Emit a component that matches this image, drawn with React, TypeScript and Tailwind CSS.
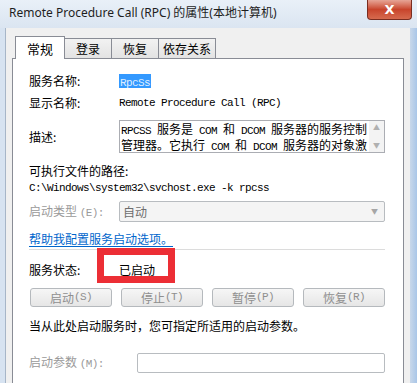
import React from 'react';

const M = ({ children }: { children: React.ReactNode }) => (
  <span className="font-['Liberation_Mono',monospace] text-[11px] tracking-[-0.6px]">{children}</span>
);

const Btn = ({ label, k }: { label: string; k: string }) => (
  <div className="w-[82px] h-[19px] flex items-center justify-center rounded-[3px] border border-[#b5b9bd] bg-gradient-to-b from-[#f6f6f6] to-[#e6e6e6] text-[#8f8f8f] text-[12px]">
    {label}
    <M>({k})</M>
  </div>
);

const Tab = ({ label, active }: { label: string; active?: boolean }) =>
  active ? (
    <div className="relative z-10 -mb-px h-[23px] w-[50px] border border-b-0 border-[#898c95] bg-white flex items-start justify-center pt-[2px] text-[13px] text-black">
      {label}
    </div>
  ) : (
    <div className="h-[20px] px-[4px] min-w-[47px] border border-l-0 border-b-0 border-[#898c95] bg-gradient-to-b from-[#f2f2f2] to-[#e3e3e3] flex items-center justify-center text-[12px] text-black">
      {label}
    </div>
  );

export default function App() {
  return (
    <div className="relative w-[417px] h-[383px] overflow-hidden bg-[#dfe8f3] font-['Noto_Sans_CJK_SC',sans-serif] text-[12px] text-black">
      {/* title bar */}
      <div className="h-[28px] flex items-center justify-between pl-[9px] bg-gradient-to-b from-[#e9f0f8] to-[#dbe5f1]">
        <span className="font-['Noto_Sans','Noto_Sans_CJK_SC',sans-serif] text-[12px] text-[#1e1e1e] -mt-[2px]">
          Remote Procedure Call (RPC) 的属性(本地计算机)
        </span>
        <div className="self-start mr-[5px] w-[45px] h-[20px] rounded-b-[4px] border border-t-0 border-[#7a2d20] bg-gradient-to-b from-[#e6a496] via-[#c8442c] to-[#d66a4e] flex items-center justify-center">
          <span className="font-['DejaVu_Sans',sans-serif] font-bold text-white text-[13px] leading-none">X</span>
        </div>
      </div>

      <div className="flex h-[355px]">
        <div className="w-[6px] bg-[#d7e3f1] border-r border-[#a7b6c8]" />
        {/* body */}
        <div className="w-[404px] bg-[#f0f0f0] pl-[6px] pr-[6px] pt-[8px]">
          <div className="flex items-end pl-[3px]">
            <Tab label="常规" active />
            <Tab label="登录" />
            <Tab label="恢复" />
            <Tab label="依存关系" />
          </div>
          <div className="h-[340px] border border-[#898c95] bg-white pl-[16px] pr-[18px] pt-[15px]">
            <div className="flex h-[14px] items-center">
              <span className="w-[90px]">服务名称:</span>
              <span className="bg-[#3399ff] text-[#dfeeff] px-[1px] h-[14px] leading-[14px]">
                <M>RpcSs</M>
              </span>
            </div>
            <div className="flex h-[14px] items-center mt-[8px]">
              <span className="w-[90px]">显示名称:</span>
              <M>Remote Procedure Call (RPC)</M>
            </div>
            <div className="flex items-center mt-[10px]">
              <span className="w-[90px]">描述:</span>
              <div className="flex w-[266px] h-[33px] border border-[#abadb3] bg-white">
                <div className="flex-1 overflow-hidden whitespace-pre pl-[1px] pt-[1px] leading-[14px] text-[12px]">
                  <div>
                    <M>RPCSS </M>服务是<M> COM </M>和<M> DCOM </M>服务器的服务控制
                  </div>
                  <div>
                    管理器。它执行<M> COM </M>和<M> DCOM </M>服务器的对象激
                  </div>
                </div>
                <div className="w-[15px] bg-[#f3f3f3] flex flex-col items-center justify-between py-[3px] text-[#b0b0b0] text-[7px] leading-none">
                  <span>▲</span>
                  <span>▼</span>
                </div>
              </div>
            </div>
            <div className="h-[14px] leading-[14px] mt-[11px]">可执行文件的路径:</div>
            <div className="h-[14px] leading-[14px] mt-[1px]">
              <M>{'C:\\Windows\\system32\\svchost.exe -k rpcss'}</M>
            </div>
            <div className="flex items-center mt-[8px]">
              <span className="w-[90px] text-[#9a9a9a]">
                启动类型 <M>(E):</M>
              </span>
              <div className="w-[266px] h-[21px] border border-[#b8bcc0] rounded-[2px] bg-[#f4f4f4] flex items-center justify-between pl-[3px] pr-[6px]">
                <span className="text-[#6d6d6d] text-[12px]">自动</span>
                <span className="text-[#a6a6a6] text-[7px]">▼</span>
              </div>
            </div>
            <div className="mt-[10px] h-[14px] leading-[14px]">
              <span className="text-[#0066cc] underline underline-offset-[2px]">帮助我配置服务启动选项。</span>
            </div>
            <div className="mt-[3px] h-px w-[356px] bg-[#dcdcdc]" />
            <div className="flex h-[14px] items-center mt-[13px]">
              <span className="w-[90px]">服务状态:</span>
              <span>已启动</span>
            </div>
            <div className="flex justify-between w-[356px] pl-[1px] mt-[11px]">
              <Btn label="启动" k="S" />
              <Btn label="停止" k="T" />
              <Btn label="暂停" k="P" />
              <Btn label="恢复" k="R" />
            </div>
            <div className="h-[14px] leading-[14px] mt-[12px] text-[12px]">当从此处启动服务时，您可指定所适用的启动参数。</div>
            <div className="flex items-center mt-[20px]">
              <span className="w-[108px] text-[#9a9a9a]">
                启动参数 <M>(M):</M>
              </span>
              <div className="w-[248px] h-[20px] border border-[#b8bcc0] rounded-[2px] bg-white" />
            </div>
          </div>
        </div>
        <div className="flex-1 bg-gradient-to-r from-[#c9d8ea] to-[#a9c6e8]" />
      </div>

      {/* red annotation box */}
      <div className="absolute left-[97px] top-[248px] w-[78px] h-[35px] border-[7px] border-[#ec2e35]" />
    </div>
  );
}
